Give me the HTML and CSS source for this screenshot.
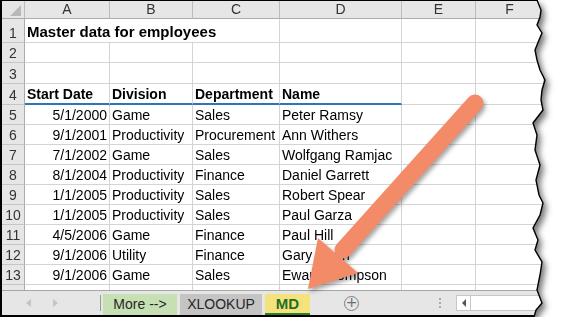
FILE: index.html
```html
<!DOCTYPE html>
<html lang="en">
<head>
  <meta charset="UTF-8" />
  <title>Master data for employees</title>
  <link rel="stylesheet" href="styles.css">
</head>
<body>

  <div class="frame">
    <div class="sheet">
      <div class="grid">
        <div class="row colhead">
          <div class="cell corner"><span class="tri"></span></div>
          <div class="cell">A</div>
          <div class="cell">B</div>
          <div class="cell">C</div>
          <div class="cell">D</div>
          <div class="cell">E</div>
          <div class="cell">F</div>
        </div>

        <div class="row tall">
          <div class="cell num">1</div>
          <div class="cell title">Master data for employees</div>
          <div class="cell"></div>
          <div class="cell"></div>
          <div class="cell"></div>
        </div>
        <div class="row">
          <div class="cell num">2</div>
          <div class="cell"></div><div class="cell"></div><div class="cell"></div>
          <div class="cell"></div><div class="cell"></div><div class="cell"></div>
        </div>
        <div class="row r21">
          <div class="cell num">3</div>
          <div class="cell"></div><div class="cell"></div><div class="cell"></div>
          <div class="cell"></div><div class="cell"></div><div class="cell"></div>
        </div>
        <div class="row r21">
          <div class="cell num">4</div>
          <div class="cell hd">Start Date</div>
          <div class="cell hd">Division</div>
          <div class="cell hd">Department</div>
          <div class="cell hd">Name</div>
          <div class="cell"></div><div class="cell"></div>
        </div>

        <div class="row">
          <div class="cell num">5</div>
          <div class="cell date">5/1/2000</div><div class="cell">Game</div><div class="cell">Sales</div><div class="cell">Peter Ramsy</div>
          <div class="cell"></div><div class="cell"></div>
        </div>
        <div class="row">
          <div class="cell num">6</div>
          <div class="cell date">9/1/2001</div><div class="cell">Productivity</div><div class="cell">Procurement</div><div class="cell">Ann Withers</div>
          <div class="cell"></div><div class="cell"></div>
        </div>
        <div class="row">
          <div class="cell num">7</div>
          <div class="cell date">7/1/2002</div><div class="cell">Game</div><div class="cell">Sales</div><div class="cell">Wolfgang Ramjac</div>
          <div class="cell"></div><div class="cell"></div>
        </div>
        <div class="row">
          <div class="cell num">8</div>
          <div class="cell date">8/1/2004</div><div class="cell">Productivity</div><div class="cell">Finance</div><div class="cell">Daniel Garrett</div>
          <div class="cell"></div><div class="cell"></div>
        </div>
        <div class="row">
          <div class="cell num">9</div>
          <div class="cell date">1/1/2005</div><div class="cell">Productivity</div><div class="cell">Sales</div><div class="cell">Robert Spear</div>
          <div class="cell"></div><div class="cell"></div>
        </div>
        <div class="row">
          <div class="cell num">10</div>
          <div class="cell date">1/1/2005</div><div class="cell">Productivity</div><div class="cell">Sales</div><div class="cell">Paul Garza</div>
          <div class="cell"></div><div class="cell"></div>
        </div>
        <div class="row">
          <div class="cell num">11</div>
          <div class="cell date">4/5/2006</div><div class="cell">Game</div><div class="cell">Finance</div><div class="cell">Paul Hill</div>
          <div class="cell"></div><div class="cell"></div>
        </div>
        <div class="row">
          <div class="cell num">12</div>
          <div class="cell date">9/1/2006</div><div class="cell">Utility</div><div class="cell">Finance</div><div class="cell">Gary Nunn</div>
          <div class="cell"></div><div class="cell"></div>
        </div>
        <div class="row">
          <div class="cell num">13</div>
          <div class="cell date">9/1/2006</div><div class="cell">Game</div><div class="cell">Sales</div><div class="cell">Ewan Thompson</div>
          <div class="cell"></div><div class="cell"></div>
        </div>
        <div class="row">
          <div class="cell num"></div>
          <div class="cell"></div><div class="cell"></div><div class="cell"></div>
          <div class="cell"></div><div class="cell"></div><div class="cell"></div>
        </div>
      </div>

      <!-- sheet tabs -->
      <div class="tabbar">
        <div class="nav">
          <span class="nav-left"></span>
          <span class="nav-right"></span>
        </div>
        <div class="sep"></div>
        <div class="tab more">More --&gt;</div>
        <div class="tab xlookup">XLOOKUP</div>
        <div class="tab active">MD</div>
        <div class="add">+</div>
        <div class="dots"><i></i><i></i><i></i></div>
        <div class="hscroll">
          <span class="hs-btn"><span class="hs-tri"></span></span>
        </div>
      </div>
    </div>

    <svg class="edge" width="548" height="320" viewBox="0 0 548 320">
      <polyline fill="none" stroke="#000" stroke-width="1.4"
        points="537,0 541,10 540,17 537,25 542,33 539,40 535,50 537,60 540,70 545,80 542,90 541,100 543,110 533,123 537,135 535,150 540,165 536,180 539,195 543,203 540,215 533,228 538,240 535,250 542,262 540,275 537,290 542,303 536,310 534,317" />
    </svg>

    <svg class="arrow" width="548" height="320" viewBox="0 0 548 320">
      <line x1="475" y1="103" x2="343" y2="250" stroke="#f38a68" stroke-width="17" stroke-linecap="round" />
      <polygon fill="#f38a68" points="308,289 318,238 358,273" />
    </svg>
  </div>

</body>
</html>
```

FILE: styles.css
```css
* {
  box-sizing: border-box;
  margin: 0;
  padding: 0;
}

body {
  background-color: #fff;
  font-family: 'Liberation Sans', Arial, sans-serif;
  color: #000;
}

.frame {
  position: relative;
  width: 548px;
  height: 317px;
  filter: drop-shadow(3px 4px 3px rgba(0,0,0,0.55));
}

.sheet {
  width: 548px;
  height: 317px;
  background: #fff;
  border-top: 1px solid #000;
  border-left: 2px solid #000;
  border-bottom: 2px solid #000;
  display: flex;
  flex-direction: column;
  clip-path: polygon(0 0, 537px 0, 541px 10px, 540px 17px, 537px 25px, 542px 33px, 539px 40px, 535px 50px, 537px 60px, 540px 70px, 545px 80px, 542px 90px, 541px 100px, 543px 110px, 533px 123px, 537px 135px, 535px 150px, 540px 165px, 536px 180px, 539px 195px, 543px 203px, 540px 215px, 533px 228px, 538px 240px, 535px 250px, 542px 262px, 540px 275px, 537px 290px, 542px 303px, 536px 310px, 534px 317px, 0 317px);
}

.grid {
  height: 289px;
  overflow: hidden;
}

.row {
  display: grid;
  grid-template-columns: 23px 85px 83px 87px 122px 74px 68px;
  height: 20px;
}

.row.tall { height: 24px; }
.row.r21 { height: 21px; }

.cell {
  display: flex;
  align-items: flex-end;
  padding: 0 2px 0 2px;
  border-right: 1px solid #d4d4d4;
  border-bottom: 1px solid #d4d4d4;
  font-size: 14px;
  line-height: 17px;
  white-space: nowrap;
  overflow: hidden;
}

.colhead {
  height: 18px;
}

.colhead .cell {
  background: #e6e6e6;
  border-right: 1px solid #bcbcbc;
  border-bottom: 1px solid #ababab;
  justify-content: center;
  align-items: center;
  padding: 0;
  font-size: 14px;
  color: #333;
}

.colhead .corner {
  position: relative;
}

.tri {
  position: absolute;
  right: 3px;
  bottom: 2px;
  width: 0;
  height: 0;
  border-left: 11px solid transparent;
  border-bottom: 11px solid #b9b9b9;
}

.num {
  background: #e6e6e6;
  border-right: 1px solid #ababab;
  border-bottom: 1px solid #c6c6c6;
  justify-content: center;
  padding: 0;
  font-size: 14px;
  color: #333;
}

.title {
  grid-column: span 3;
  font-weight: bold;
  font-size: 15px;
  padding-bottom: 2px;
}

.hd {
  font-weight: bold;
  border-bottom: 2px solid #2e75b6;
}

.date {
  justify-content: flex-end;
}

/* sheet tabs */
.tabbar {
  flex: 1;
  display: flex;
  align-items: center;
  background: #e6e6e6;
  border-top: 1px solid #a6a6a6;
}

.nav {
  width: 98px;
  height: 100%;
  display: flex;
  align-items: center;
  gap: 22px;
  padding-left: 24px;
}

.nav-left, .nav-right {
  width: 0;
  height: 0;
  border-top: 4px solid transparent;
  border-bottom: 4px solid transparent;
}

.nav-left { border-right: 5px solid #c4c4c4; }
.nav-right { border-left: 5px solid #c4c4c4; }

.sep {
  width: 1px;
  height: 16px;
  background: #9a9a9a;
}

.tab {
  height: 21px;
  margin-left: 2px;
  margin-top: 2px;
  display: flex;
  align-items: center;
  justify-content: center;
  font-size: 14px;
  color: #262626;
}

.tab.more {
  width: 74px;
  background: #c6e0b4;
}

.tab.xlookup {
  width: 82px;
  margin-left: 3px;
  background: #c4c4c4;
}

.tab.active {
  width: 45px;
  margin-left: 3px;
  background: #f6e27a;
  color: #1f6f2a;
  font-weight: bold;
  font-size: 15px;
  border-bottom: 2px solid #2c7a33;
}

.add {
  width: 15px;
  height: 15px;
  margin-left: 34px;
  border: 1.5px solid #7f7f7f;
  border-radius: 50%;
  color: #6f6f6f;
  font-size: 14px;
  line-height: 11px;
  text-align: center;
  font-family: 'DejaVu Sans', sans-serif;
}

.dots {
  margin-left: 80px;
  display: flex;
  flex-direction: column;
  gap: 2px;
}

.dots i {
  width: 2px;
  height: 2px;
  background: #aaa;
}

.hscroll {
  margin-left: 15px;
  flex: 1;
  height: 16px;
  background: #fff;
  border: 1px solid #c6c6c6;
  border-right: none;
}

.hs-btn {
  display: flex;
  align-items: center;
  justify-content: center;
  width: 14px;
  height: 100%;
  border-right: 1px solid #c6c6c6;
}

.hs-tri {
  width: 0;
  height: 0;
  border-top: 4px solid transparent;
  border-bottom: 4px solid transparent;
  border-right: 4px solid #555;
}

.edge, .arrow {
  position: absolute;
  top: 0;
  left: 0;
  pointer-events: none;
}

.arrow {
  filter: drop-shadow(2px 3px 2px rgba(0,0,0,0.35));
}
```
